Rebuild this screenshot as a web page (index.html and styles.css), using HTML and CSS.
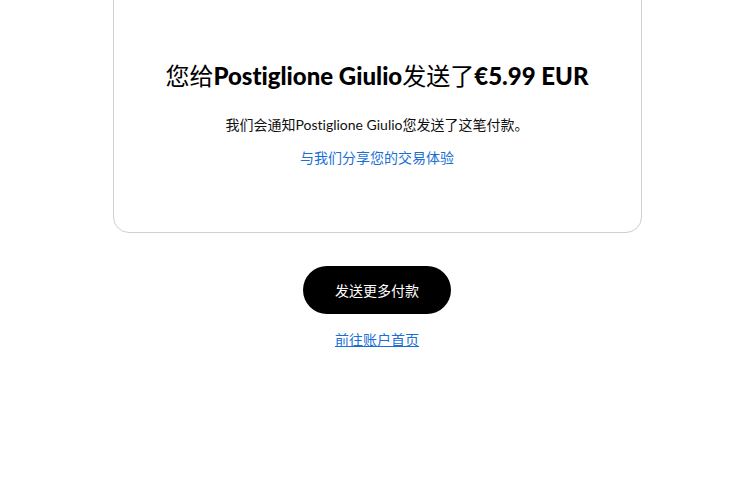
FILE: index.html
```html
<!DOCTYPE html>
<html lang="zh-CN">
<head>
    <meta charset="UTF-8">
    <meta name="viewport" content="width=device-width, initial-scale=1.0">
    <title>付款已发送</title>
    <link rel="stylesheet" href="styles.css">
</head>
<body>
    <div class="page">
        <div class="card">
            <h1 class="title">您给<strong>Postiglione Giulio</strong>发送了<strong>€5.99 EUR</strong></h1>
            <p class="note">我们会通知Postiglione Giulio您发送了这笔付款。</p>
            <a class="feedback" href="#">与我们分享您的交易体验</a>
        </div>

        <div class="actions">
            <button type="button" class="send-more">发送更多付款</button>
            <a class="home-link" href="#">前往账户首页</a>
        </div>
    </div>
</body>
</html>
```

FILE: styles.css
```css
body {
    font-family: Lato, "Noto Sans CJK SC", sans-serif;
    font-variant-ligatures: none;
    background-color: #fff;
    color: #000;
    margin: 0;
    padding: 0 0 0 7px;
}

.page {
    width: 529px;
    margin: 0 auto;
}

.card {
    margin-top: -30px;
    padding: 89px 20px 64px;
    border: 1px solid #cfcfcf;
    border-radius: 16px;
    text-align: center;
}

.title {
    margin: 0;
    font-size: 24px;
    line-height: 32px;
    font-weight: 400;
}

.title strong {
    font-weight: 900;
}

.note {
    margin: 23px 0 0;
    font-size: 14px;
    line-height: 20px;
    color: #111;
}

.feedback {
    display: inline-block;
    margin-top: 13px;
    font-size: 14px;
    line-height: 20px;
    color: #1a6fd6;
    text-decoration: none;
}

.actions {
    display: flex;
    flex-direction: column;
    align-items: center;
    padding-top: 33px;
}

.send-more {
    width: 148px;
    height: 48px;
    border: none;
    border-radius: 24px;
    background-color: #000;
    color: #fff;
    font-family: Lato, "Noto Sans CJK SC", sans-serif;
    font-size: 14px;
    font-weight: 400;
    cursor: pointer;
}

.home-link {
    margin-top: 16px;
    font-size: 14px;
    line-height: 20px;
    color: #1a6fd6;
}
```
